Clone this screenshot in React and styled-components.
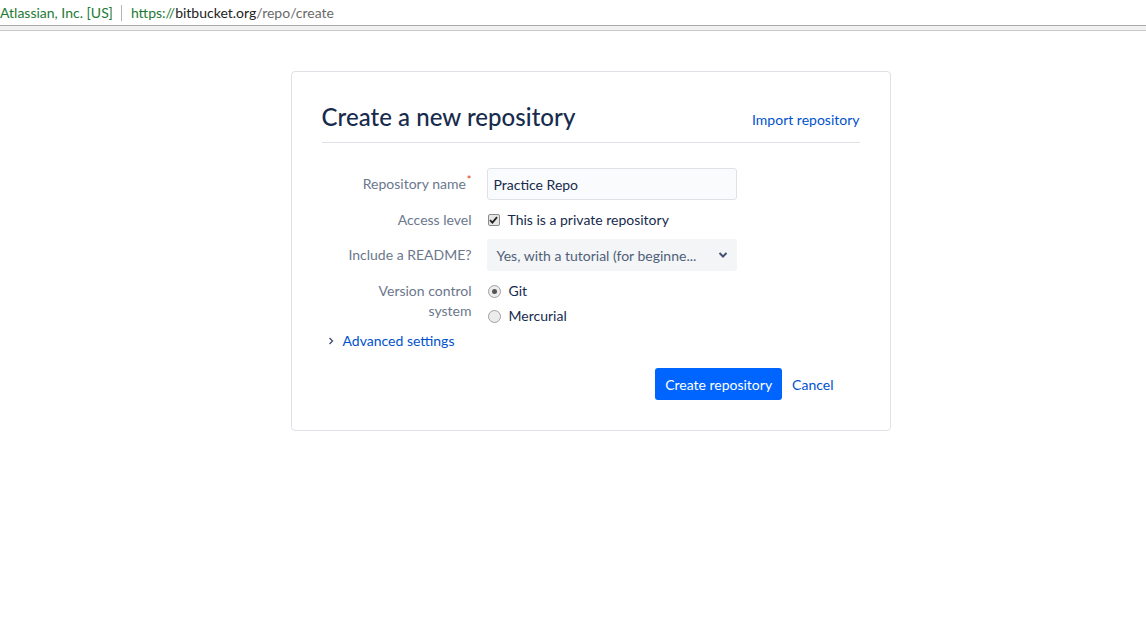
import React from "react";
import styled, { createGlobalStyle } from "styled-components";

const Global = createGlobalStyle`
  html, body { margin: 0; padding: 0; background: #fff; }
  body { font-family: Lato, "Noto Sans", "Liberation Sans", sans-serif; color: #172b4d; }
  * { box-sizing: border-box; }
`;

const AddressBar = styled.div`
  height: 25px;
  display: flex;
  align-items: center;
  font-size: 14px;
  white-space: nowrap;
`;
const Org = styled.span`
  color: #1e7b34;
  padding-right: 8px;
  border-right: 1px solid #b5b5b5;
  line-height: 16px;
`;
const Url = styled.span`
  padding-left: 9px;
  color: #6a6a6a;
`;
const Scheme = styled.span` color: #1e7b34; `;
const Host = styled.span` color: #222; `;

const Divider = styled.div`
  height: 6px;
  background: #f1f1f1;
  border-top: 1px solid #a9a9a9;
  border-bottom: 1px solid #c9c9c9;
`;

const Page = styled.div`
  display: flex;
  justify-content: center;
  padding-top: 40px;
`;

const Card = styled.div`
  width: 600px;
  border: 1px solid #dfe1e6;
  border-radius: 4px;
  padding: 29px 30px 30px;
  margin-left: 35px;
`;

const Header = styled.div`
  display: flex;
  justify-content: space-between;
  align-items: baseline;
  border-bottom: 1px solid #dfe1e6;
  padding-bottom: 9px;
`;
const Title = styled.h1`
  margin: 0;
  font-size: 24px;
  font-weight: 500;
  line-height: 32px;
  color: #172b4d;
  letter-spacing: 0.05px;
`;
const Link = styled.a`
  color: #0052cc;
  font-size: 14px;
  text-decoration: none;
  cursor: pointer;
`;
const HeaderLink = styled(Link)`
  position: relative;
  top: -1px;
`;

const Form = styled.form`
  width: 512px;
  margin-top: 25px;
  font-size: 14px;
`;

const Row = styled.div`
  display: grid;
  grid-template-columns: 150px 1fr;
  column-gap: 15px;
  align-items: ${(p) => (p.$top ? "start" : "center")};
  margin-bottom: ${(p) => p.$mb ?? 10}px;
`;
const Label = styled.label`
  text-align: right;
  color: #6b778c;
  line-height: 20px;
`;
const Req = styled.span`
  color: #de350b;
  font-size: 11px;
  vertical-align: top;
  position: relative;
  top: -4px;
  margin-left: 1px;
`;
const TextInput = styled.input`
  width: 250px;
  height: 32px;
  border: 1px solid #dfe1e6;
  border-radius: 3px;
  background: #fafbfc;
  padding: 0 6px;
  font: inherit;
  color: #172b4d;
  outline: none;
`;
const Check = styled.label`
  display: flex;
  align-items: center;
  gap: 8px;
  line-height: 20px;
  color: #172b4d;
`;
const Box = styled.span`
  width: 12px;
  height: 12px;
  margin-left: 1px;
  border: 1px solid #8a8a8a;
  border-radius: 2px;
  background: #e6e6e6;
  display: inline-flex;
  align-items: center;
  justify-content: center;
`;
const Select = styled.div`
  width: 250px;
  height: 32px;
  border-radius: 3px;
  background: #f4f5f7;
  display: flex;
  align-items: center;
  justify-content: space-between;
  padding: 0 9px 0 10px;
  color: #505f79;
  white-space: nowrap;
`;
const Radios = styled.div`
  display: flex;
  flex-direction: column;
  gap: 5px;
`;
const Radio = styled.span`
  width: 13px;
  height: 13px;
  margin-left: 1px;
  border-radius: 50%;
  border: 1px solid #a0a0a0;
  background: #ececec;
  display: inline-flex;
  align-items: center;
  justify-content: center;
  &::after {
    content: "";
    width: 5px;
    height: 5px;
    border-radius: 50%;
    background: ${(p) => (p.$on ? "#555" : "transparent")};
  }
`;
const Advanced = styled.div`
  display: flex;
  align-items: center;
  gap: 9px;
  line-height: 20px;
  margin-left: 6px;
  margin-bottom: 17px;
`;
const Actions = styled.div`
  display: flex;
  justify-content: flex-end;
  align-items: center;
  gap: 10px;
`;
const Primary = styled.button`
  height: 32px;
  padding: 0 10px;
  border: none;
  border-radius: 3px;
  background: #0065ff;
  color: #fff;
  font: inherit;
  cursor: pointer;
`;

export default function App() {
  return (
    <>
      <Global />
      <AddressBar>
        <Org>Atlassian, Inc. [US]</Org>
        <Url>
          <Scheme>https://</Scheme>
          <Host>bitbucket.org</Host>/repo/create
        </Url>
      </AddressBar>
      <Divider />
      <Page>
        <Card>
          <Header>
            <Title>Create a new repository</Title>
            <HeaderLink>Import repository</HeaderLink>
          </Header>
          <Form>
            <Row>
              <Label>
                Repository name<Req>*</Req>
              </Label>
              <TextInput defaultValue="Practice Repo" />
            </Row>
            <Row $mb={9}>
              <Label>Access level</Label>
              <Check>
                <Box>
                  <svg width="9" height="8" viewBox="0 0 9 8">
                    <path d="M1 4.2 L3.4 6.6 L8 1.2" fill="none" stroke="#222" strokeWidth="1.8" />
                  </svg>
                </Box>
                This is a private repository
              </Check>
            </Row>
            <Row>
              <Label>Include a README?</Label>
              <Select>
                <span>Yes, with a tutorial (for beginne...</span>
                <svg width="10" height="8" viewBox="0 0 10 8">
                  <path d="M1.5 2 L5 5.5 L8.5 2" fill="none" stroke="#42526e" strokeWidth="2" />
                </svg>
              </Select>
            </Row>
            <Row $top $mb={5}>
              <Label>
                Version control
                <br />
                system
              </Label>
              <Radios>
                <Check>
                  <Radio $on />
                  Git
                </Check>
                <Check>
                  <Radio />
                  Mercurial
                </Check>
              </Radios>
            </Row>
            <Advanced>
              <svg width="6" height="8" viewBox="0 0 6 8">
                <path d="M1.5 1 L4.5 4 L1.5 7" fill="none" stroke="#42526e" strokeWidth="1.4" />
              </svg>
              <Link>Advanced settings</Link>
            </Advanced>
            <Actions>
              <Primary type="button">Create repository</Primary>
              <Link>Cancel</Link>
            </Actions>
          </Form>
        </Card>
      </Page>
    </>
  );
}
